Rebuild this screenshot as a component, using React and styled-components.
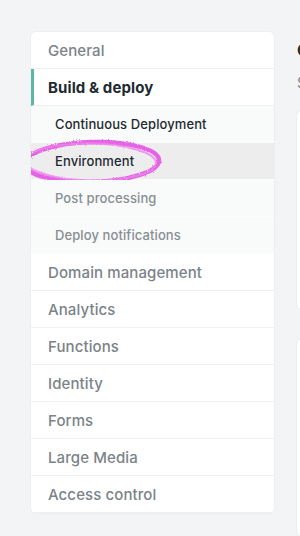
import React from 'react';
import styled, { createGlobalStyle } from 'styled-components';

const GlobalStyle = createGlobalStyle`
  body {
    margin: 0;
    background: #f3f4f6;
    font-family: Inter, "Liberation Sans", sans-serif;
    -webkit-font-smoothing: antialiased;
  }
`;

const nav = [
  { label: 'General' },
  {
    label: 'Build & deploy',
    active: true,
    children: [
      { label: 'Continuous Deployment', current: true },
      { label: 'Environment', hovered: true, circled: true },
      { label: 'Post processing' },
      { label: 'Deploy notifications' },
    ],
  },
  { label: 'Domain management' },
  { label: 'Analytics' },
  { label: 'Functions' },
  { label: 'Identity' },
  { label: 'Forms' },
  { label: 'Large Media' },
  { label: 'Access control' },
];

const Page = styled.div`
  display: flex;
  gap: 23px;
  padding: 32px 0 0 31px;
  height: 536px;
  box-sizing: border-box;
  overflow: hidden;
`;

const Sidebar = styled.nav`
  flex: 0 0 243px;
  align-self: flex-start;
  background: #fff;
  border-radius: 5px;
  box-shadow: 0 0 0 1px #eceef0, 0 1px 2px rgba(0, 0, 0, 0.04);
  overflow: hidden;
`;

const Item = styled.a`
  display: flex;
  align-items: center;
  height: 36px;
  padding-left: ${(p) => (p.$active ? '14px' : '17px')};
  border-left: ${(p) => (p.$active ? '3px solid #5cb8a6' : 'none')};
  border-bottom: 1px solid #eef0f2;
  font-size: 15px;
  font-weight: ${(p) => (p.$active ? 700 : 500)};
  color: ${(p) => (p.$active ? '#1e2a31' : '#7b8388')};
  letter-spacing: 0.1px;
  cursor: pointer;
`;

const SubList = styled.div`
  display: flex;
  flex-direction: column;
`;

const SubItem = styled.a`
  position: relative;
  display: flex;
  align-items: center;
  height: 36px;
  padding-left: 24px;
  border-bottom: 1px solid #fdfdfd;
  background: ${(p) => (p.$hovered ? '#ededee' : '#f9fafa')};
  font-size: 13px;
  font-weight: 500;
  letter-spacing: 0.1px;
  color: ${(p) => (p.$current || p.$hovered ? '#1e2a31' : '#878e93')};
  cursor: pointer;
`;

const Circle = styled.svg`
  position: absolute;
  left: -11px;
  top: -6px;
  width: 144px;
  height: 50px;
  overflow: visible;
  pointer-events: none;
`;

const Main = styled.main`
  flex: 1 0 260px;
  display: flex;
  flex-direction: column;
`;

const Heading = styled.h2`
  margin: 8px 0 0;
  font-size: 16px;
  font-weight: 700;
  color: #1e2a31;
  white-space: nowrap;
`;

const Lead = styled.p`
  margin: 14px 0 0;
  font-size: 14px;
  color: #7b8388;
  white-space: nowrap;
`;

const Card = styled.section`
  margin-top: 20px;
  height: 375px;
  background: #fff;
  border-radius: 5px;
  box-shadow: 0 0 0 1px #eceef0;
`;

const NextCard = styled(Card)`
  margin-top: 30px;
`;

const Scribble = () => (
  <Circle viewBox="0 0 144 50">
    <defs>
      <filter id="crayon" x="-10%" y="-30%" width="120%" height="160%">
        <feTurbulence type="fractalNoise" baseFrequency="0.9" numOctaves="2" seed="3" />
        <feDisplacementMap in="SourceGraphic" scale="2.5" />
      </filter>
    </defs>
    <g filter="url(#crayon)" fill="none">
      <ellipse
        cx="72"
        cy="25"
        rx="67"
        ry="20"
        stroke="#e564e4"
        strokeWidth="4.5"
        transform="rotate(-1.5 72 25)"
      />
      <ellipse
        cx="71"
        cy="25"
        rx="65"
        ry="18.5"
        stroke="#ee84ee"
        strokeWidth="2"
        opacity="0.8"
        transform="rotate(1 72 25)"
      />
    </g>
  </Circle>
);

export default function App() {
  return (
    <>
      <GlobalStyle />
      <Page>
        <Sidebar>
          {nav.map((item) => (
            <React.Fragment key={item.label}>
              <Item $active={item.active}>{item.label}</Item>
              {item.children && (
                <SubList>
                  {item.children.map((sub) => (
                    <SubItem key={sub.label} $current={sub.current} $hovered={sub.hovered}>
                      {sub.label}
                      {sub.circled && <Scribble />}
                    </SubItem>
                  ))}
                </SubList>
              )}
            </React.Fragment>
          ))}
        </Sidebar>
        <Main>
          <Heading>Continuous Deployment</Heading>
          <Lead>Settings for continuous deployment</Lead>
          <Card />
          <NextCard />
        </Main>
      </Page>
    </>
  );
}
